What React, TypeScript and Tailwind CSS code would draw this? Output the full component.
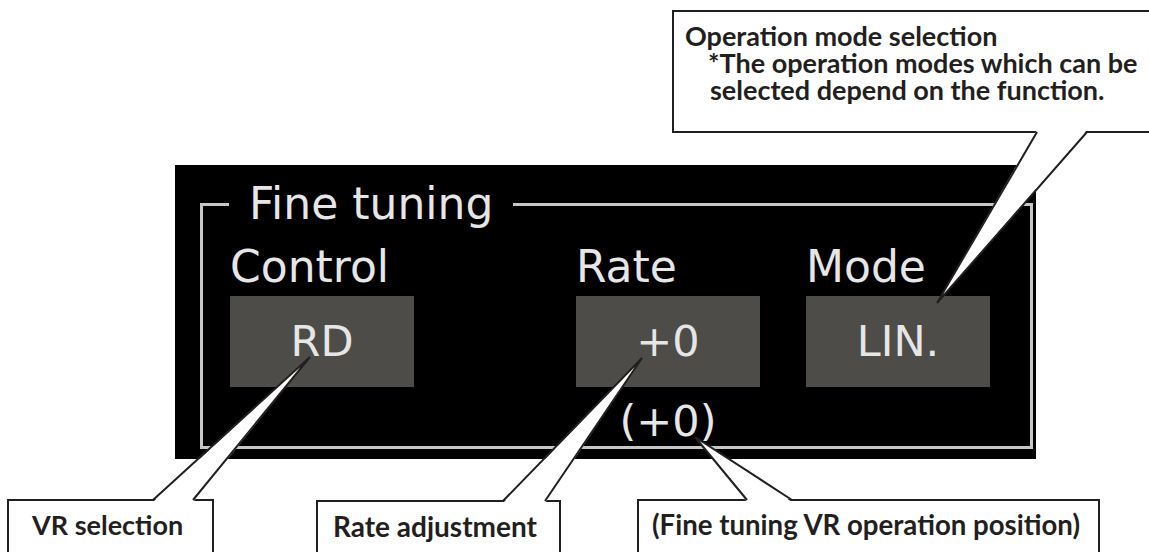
import React from "react";

type Pt = [number, number];

const tails: { l: Pt; tip: Pt; r: Pt }[] = [
  { l: [1037, 132], tip: [937, 303], r: [1087, 132] },
  { l: [153, 500], tip: [310, 357], r: [193, 500] },
  { l: [503, 501], tip: [642, 358], r: [545, 501] },
  { l: [747, 500], tip: [695, 437], r: [792, 500] },
];

function Tails() {
  return (
    <svg className="pointer-events-none absolute left-0 top-0" width={1149} height={552} viewBox="0 0 1149 552">
      {tails.map((t, i) => {
        const up = t.l[1] > t.tip[1] ? 2 : -2;
        const poly = `${t.l[0]},${t.l[1] + up} ${t.tip[0]},${t.tip[1]} ${t.r[0]},${t.r[1] + up}`;
        const line = `${t.l[0]},${t.l[1]} ${t.tip[0]},${t.tip[1]} ${t.r[0]},${t.r[1]}`;
        return (
          <g key={i}>
            <polygon points={poly} fill="#ffffff" />
            <polyline points={line} fill="none" stroke="#231f20" strokeWidth={2} strokeLinejoin="miter" />
          </g>
        );
      })}
    </svg>
  );
}

function Column({ label, value, children }: { label: string; value: string; children?: React.ReactNode }) {
  return (
    <div className="flex w-[184px] flex-col">
      <div className="mt-[11px] text-[44px] leading-[52px]">{label}</div>
      <div className="mt-[3px] flex h-[91px] items-center justify-center bg-[#4e4c49] text-[43px] leading-none">
        {value}
      </div>
      {children}
    </div>
  );
}

export default function App() {
  return (
    <div className="relative h-[552px] w-[1149px] overflow-hidden bg-white pl-[175px] pt-[165px]">
      {/* transmitter screen */}
      <div className="h-[294px] w-[861px] bg-black pl-[25px] pt-[13px] font-['DejaVu_Sans',sans-serif] text-[#e6e6e6]">
        <fieldset className="h-[271px] w-[833px] border-[3px] border-[#c6c6c6]">
          <legend className="ml-[26px] px-[20px] text-[44px] leading-[52px]">Fine tuning</legend>
          <div className="flex pl-[27px]">
            <Column label="Control" value="RD" />
            <div className="ml-[162px]">
              <Column label="Rate" value="+0">
                <div className="mt-[11px] text-center text-[43px] leading-[46px]">(+0)</div>
              </Column>
            </div>
            <div className="ml-[46px]">
              <Column label="Mode" value="LIN." />
            </div>
          </div>
        </fieldset>
      </div>

      {/* callouts */}
      <div className="absolute left-[672px] top-[10px] h-[123px] w-[520px] border-2 border-[#231f20] bg-white pl-[11px] pt-[10px] font-['Lato',sans-serif] text-[27px] font-bold leading-[27px] text-[#231f20]">
        <div>Operation mode selection</div>
        <div className="pl-[23px]">*The operation modes which can be</div>
        <div className="pl-[25px]">selected depend on the function.</div>
      </div>

      <div className="absolute left-[7px] top-[499px] h-[80px] w-[207px] border-2 border-[#231f20] bg-white pl-[23px] pt-[9px] font-['Lato',sans-serif] text-[27px] font-bold leading-[30px] text-[#231f20]">
        VR selection
      </div>
      <div className="absolute left-[316px] top-[500px] h-[80px] w-[245px] border-2 border-[#231f20] bg-white pl-[15px] pt-[9px] font-['Lato',sans-serif] text-[28px] font-bold leading-[30px] text-[#231f20]">
        Rate adjustment
      </div>
      <div className="absolute left-[637px] top-[499px] h-[80px] w-[463px] border-2 border-[#231f20] bg-white pl-[13px] pt-[9px] font-['Lato',sans-serif] text-[27.6px] font-bold leading-[30px] text-[#231f20]">
        (Fine tuning VR operation position)
      </div>

      <Tails />
    </div>
  );
}
